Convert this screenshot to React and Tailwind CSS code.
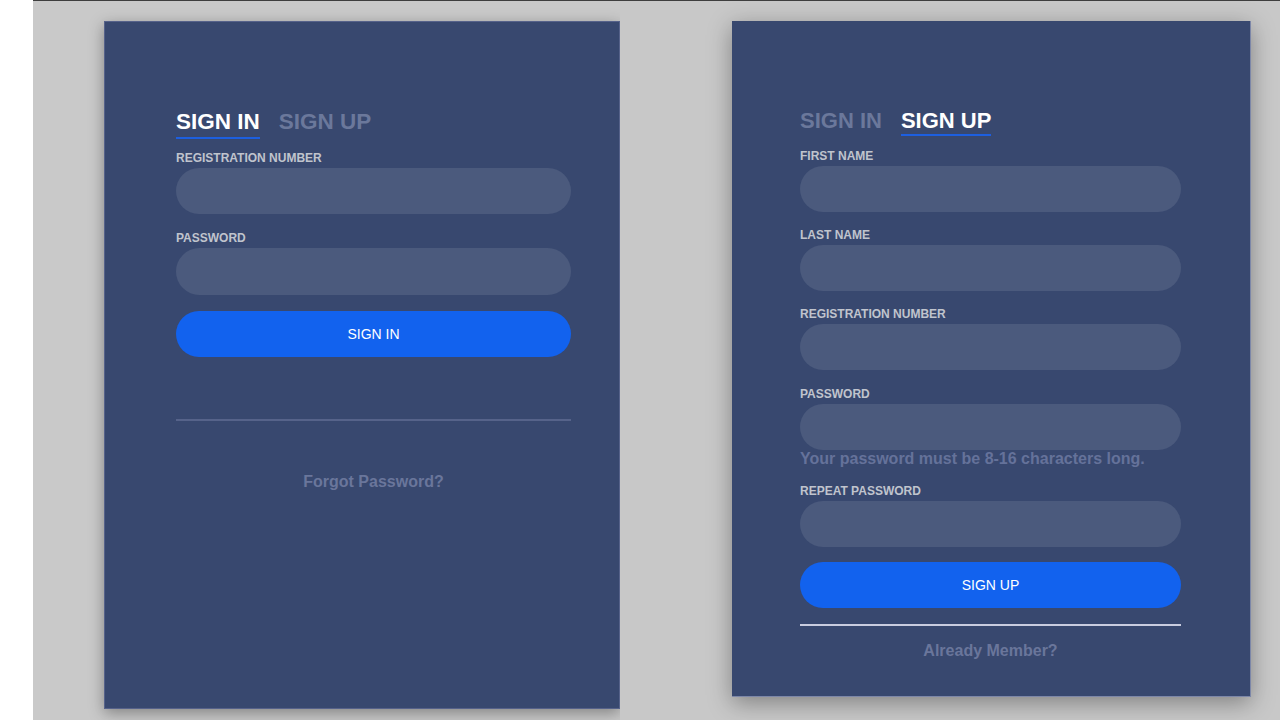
import React from "react";

const font = { fontFamily: '"Liberation Sans", Arial, sans-serif' };

function Label({ children, className = "" }) {
  return (
    <div className={`text-[12px] leading-[14px] font-bold text-[#c0c4cd] mb-[3px] ${className}`}>
      {children}
    </div>
  );
}

function Input({ h = "h-[46px]" }) {
  return <div className={`w-full ${h} rounded-full bg-[#4b5a7d]`} />;
}

function Button({ children }) {
  return (
    <div className="w-full h-[46px] rounded-full bg-[#1262ee] flex items-center justify-center text-white text-[14px] leading-[16px]">
      {children}
    </div>
  );
}

function SignInCard() {
  return (
    <div className="w-[516px] h-[688px] bg-[#38486f] border border-[#56628a] shadow-[0_4px_14px_rgba(0,0,0,0.35)] pl-[71px] pt-[87px]">
      <div className="w-[395px] flex flex-col">
        <div className="flex items-start gap-[19px] text-[22.5px] leading-[26px] font-bold">
          <div className="text-white border-b-2 border-[#1d5fe0] pb-[2px]">SIGN IN</div>
          <div className="text-[#6b789b]">SIGN UP</div>
        </div>
        <Label className="mt-[12px] text-[12.3px]">REGISTRATION NUMBER</Label>
        <Input />
        <Label className="mt-[17px]">PASSWORD</Label>
        <Input h="h-[47px]" />
        <div className="mt-[16px]">
          <Button>SIGN IN</Button>
        </div>
        <div className="mt-[62px] h-[2px] w-full bg-[#56638a]" />
        <div className="mt-[52px] text-center text-[16px] leading-[18px] font-bold text-[#6a769b]">
          Forgot Password?
        </div>
      </div>
    </div>
  );
}

function SignUpCard() {
  return (
    <div className="w-[519px] h-[676px] bg-[#38486f] border-r border-b border-[#7d87a8] shadow-[0_6px_22px_rgba(0,0,0,0.35)] pl-[68px] pt-[87px]">
      <div className="w-[381px] flex flex-col">
        <div className="flex items-start gap-[19px] text-[22px] leading-[26px] font-bold">
          <div className="text-[#6b789b]">SIGN IN</div>
          <div className="text-white border-b-2 border-[#1d5fe0]">SIGN UP</div>
        </div>
        <Label className="mt-[13px]">FIRST NAME</Label>
        <Input />
        <Label className="mt-[16px]">LAST NAME</Label>
        <Input />
        <Label className="mt-[16px]">REGISTRATION NUMBER</Label>
        <Input />
        <Label className="mt-[17px]">PASSWORD</Label>
        <Input />
        <div className="text-[16px] leading-[18px] font-bold text-[#65729a]">
          Your password must be 8-16 characters long.
        </div>
        <Label className="mt-[16px]">REPEAT PASSWORD</Label>
        <Input />
        <div className="mt-[15px]">
          <Button>SIGN UP</Button>
        </div>
        <div className="mt-[16px] h-[2px] w-full bg-[#c9cde0]" />
        <div className="mt-[16px] text-center text-[16px] leading-[18px] font-bold text-[#6a769b]">
          Already Member?
        </div>
      </div>
    </div>
  );
}

export default function App() {
  return (
    <div className="w-[1280px] h-[720px] flex overflow-hidden" style={font}>
      <div className="w-[33px] h-full bg-white" />
      <div className="flex-1 flex flex-col bg-[#c8c8c8]">
        <div className="h-px bg-[#3e3e3e]" />
        <div className="flex flex-1">
          <div className="w-[587px] h-full overflow-hidden pl-[71px] pt-[20px] bg-[#c9c9c9]">
            <SignInCard />
          </div>
          <div className="w-[660px] h-full overflow-hidden pl-[112px] pt-[20px]">
            <SignUpCard />
          </div>
        </div>
      </div>
    </div>
  );
}
